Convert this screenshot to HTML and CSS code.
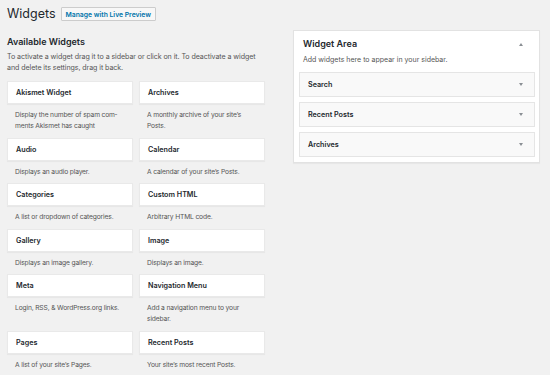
FILE: index.html
```html
<!DOCTYPE html>
<html>
<head>
<meta charset="utf-8">
<link rel="stylesheet" href="styles.css">
</head>
<body>
<div class="page">
  <header class="head">
    <h1 class="title">Widgets</h1>
    <a class="btn">Manage with Live Preview</a>
  </header>
  <div class="cols">
    <section class="avail">
      <h2 class="avail-title">Available Widgets</h2>
      <p class="avail-desc">To activate a widget drag it to a sidebar or click on it. To deactivate a widget and delete its settings, drag it back.</p>
      <div class="grid">
        <div class="widget"><div class="card">Akismet Widget</div><p class="desc">Display the number of spam com&shy;ments Akismet has caught</p></div>
        <div class="widget"><div class="card">Archives</div><p class="desc">A monthly archive of your site’s Posts.</p></div>
        <div class="widget"><div class="card">Audio</div><p class="desc">Displays an audio player.</p></div>
        <div class="widget"><div class="card">Calendar</div><p class="desc">A calendar of your site’s Posts.</p></div>
        <div class="widget"><div class="card">Categories</div><p class="desc">A list or dropdown of categories.</p></div>
        <div class="widget"><div class="card">Custom HTML</div><p class="desc">Arbitrary HTML code.</p></div>
        <div class="widget"><div class="card">Gallery</div><p class="desc">Displays an image gallery.</p></div>
        <div class="widget"><div class="card">Image</div><p class="desc">Displays an image.</p></div>
        <div class="widget"><div class="card">Meta</div><p class="desc">Login, RSS, &amp; WordPress.org links.</p></div>
        <div class="widget"><div class="card">Navigation Menu</div><p class="desc">Add a navigation menu to your sidebar.</p></div>
        <div class="widget"><div class="card">Pages</div><p class="desc">A list of your site’s Pages.</p></div>
        <div class="widget"><div class="card">Recent Posts</div><p class="desc">Your site’s most recent Posts.</p></div>
      </div>
    </section>
    <aside class="area">
      <div class="area-head">
        <h3 class="area-title">Widget Area</h3>
        <span class="arrow-up"></span>
      </div>
      <p class="area-desc">Add widgets here to appear in your sidebar.</p>
      <div class="items">
        <div class="item"><span>Search</span><span class="arrow-down"></span></div>
        <div class="item"><span>Recent Posts</span><span class="arrow-down"></span></div>
        <div class="item"><span>Archives</span><span class="arrow-down"></span></div>
      </div>
    </aside>
  </div>
</div>
</body>
</html>
```

FILE: styles.css
```css
* { box-sizing: border-box; }
html, body { margin: 0; padding: 0; }
body {
  background: #f1f1f1;
  font-family: Inter, "Liberation Sans", sans-serif;
  color: #23282d;
  width: 550px;
  height: 375px;
  overflow: hidden;
}
.page { padding: 7px 0 0 7px; }
.head {
  display: flex;
  align-items: center;
  height: 14px;
  gap: 5px;
}
.title {
  margin: 0;
  font-size: 12.5px;
  font-weight: 400;
  line-height: 14px;
  color: #23282d;
}
.btn {
  display: flex;
  align-items: center;
  height: 14px;
  padding: 0 4px;
  border: 1px solid #ccc;
  background: #f7f7f7;
  color: #0073aa;
  font-size: 6.8px;
  font-weight: 600;
  border-radius: 1px;
}
.cols {
  display: flex;
  gap: 28px;
  margin-top: 9px;
}
.avail { width: 258px; }
.avail-title {
  margin: 5px 0 0;
  font-size: 9px;
  font-weight: 600;
  line-height: 14px;
}
.avail-desc {
  margin: 2px 0 0;
  font-size: 7.1px;
  letter-spacing: -0.08px;
  line-height: 11px;
  color: #555;
}
.grid {
  display: grid;
  grid-template-columns: 126px 126px;
  column-gap: 6px;
  margin-top: 8px;
}
.card {
  height: 23px;
  display: flex;
  align-items: center;
  padding: 0 8px;
  background: #fff;
  border: 1px solid #e9e9e9;
  box-shadow: 0 1px 1px rgba(0,0,0,0.04);
  font-size: 7.2px;
  font-weight: 600;
  color: #23282d;
}
.desc {
  margin: 0;
  padding: 6px 8px 5.6px;
  font-size: 6.7px;
  letter-spacing: -0.15px;
  line-height: 11px;
  color: #555;
  hyphens: manual;
}
.area {
  width: 247px;
  height: 133px;
  background: #fff;
  border: 1px solid #e2e2e2;
  box-shadow: 0 1px 1px rgba(0,0,0,0.04);
  padding: 5px 4px 5px 5px;
}
.area-head {
  display: flex;
  justify-content: space-between;
  align-items: center;
  height: 14px;
  margin-top: 1px;
  padding: 0 12px 0 4px;
}
.area-title {
  margin: 0;
  font-size: 9px;
  font-weight: 600;
  line-height: 14px;
}
.arrow-up {
  width: 0; height: 0;
  border-left: 2.5px solid transparent;
  border-right: 2.5px solid transparent;
  border-bottom: 3px solid #8a8f94;
}
.arrow-down {
  width: 0; height: 0;
  border-left: 2.5px solid transparent;
  border-right: 2.5px solid transparent;
  border-top: 3px solid #8a8f94;
}
.area-desc {
  margin: 3px 0 0 4px;
  font-size: 7px;
  line-height: 11px;
  color: #555;
}
.items {
  display: flex;
  flex-direction: column;
  gap: 5px;
  margin-top: 7px;
}
.item {
  height: 25px;
  display: flex;
  justify-content: space-between;
  align-items: center;
  padding: 0 11px 0 8px;
  background: #f9f9f9;
  border: 1px solid #e5e5e5;
  font-size: 7.2px;
  font-weight: 600;
}
```
